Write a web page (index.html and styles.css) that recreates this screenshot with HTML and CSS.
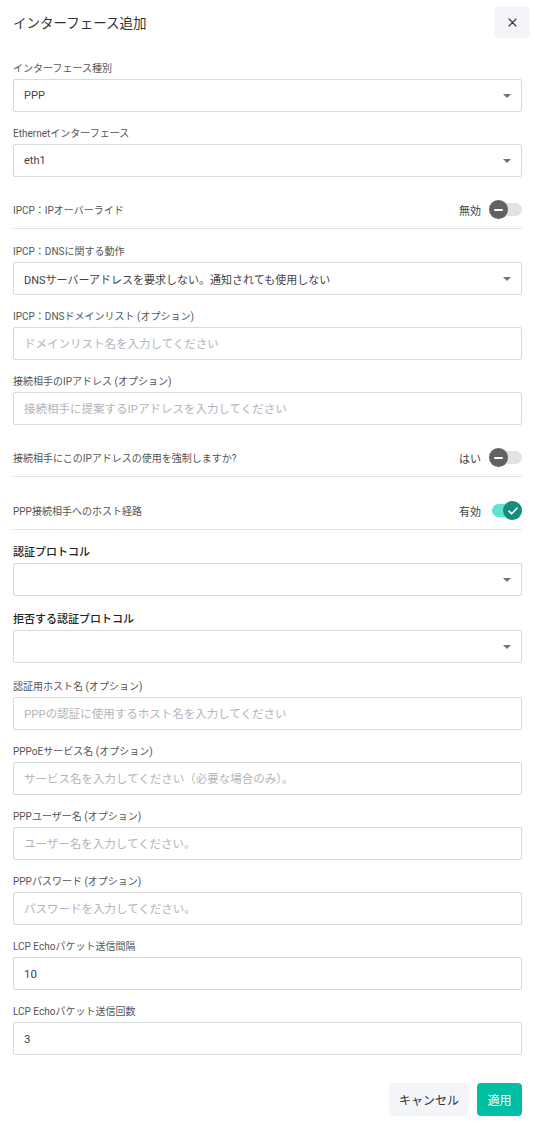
FILE: index.html
```html
<!DOCTYPE html>
<html lang="ja">
<head>
<meta charset="utf-8">
<title>インターフェース追加</title>
<link rel="stylesheet" href="styles.css">
</head>
<body>
<div class="dialog">
  <div class="header">
    <h1 class="title">インターフェース追加</h1>
    <button class="close" type="button" aria-label="閉じる">
      <svg width="9" height="9" viewBox="0 0 9 9"><path d="M1 1L8 8M8 1L1 8" stroke="#333" stroke-width="1.1" fill="none" stroke-linecap="round"/></svg>
    </button>
  </div>

  <div class="field">
    <div class="label">インターフェース種別</div>
    <div class="select"><span>PPP</span><i class="caret"></i></div>
  </div>

  <div class="field">
    <div class="label">Ethernetインターフェース</div>
    <div class="select"><span>eth1</span><i class="caret"></i></div>
  </div>

  <div class="toggle-row">
    <span class="row-text">IPCP：IPオーバーライド</span>
    <div class="toggle-wrap"><span class="state">無効</span><span class="switch off"><span class="knob"><i class="minus"></i></span></span></div>
  </div>

  <div class="field">
    <div class="label">IPCP：DNSに関する動作</div>
    <div class="select"><span>DNSサーバーアドレスを要求しない。通知されても使用しない</span><i class="caret"></i></div>
  </div>

  <div class="field">
    <div class="label">IPCP：DNSドメインリスト (オプション)</div>
    <input class="input" type="text" placeholder="ドメインリスト名を入力してください">
  </div>

  <div class="field">
    <div class="label">接続相手のIPアドレス (オプション)</div>
    <input class="input" type="text" placeholder="接続相手に提案するIPアドレスを入力してください">
  </div>

  <div class="toggle-row">
    <span class="row-text">接続相手にこのIPアドレスの使用を強制しますか?</span>
    <div class="toggle-wrap"><span class="state">はい</span><span class="switch off"><span class="knob"><i class="minus"></i></span></span></div>
  </div>

  <div class="toggle-row">
    <span class="row-text">PPP接続相手へのホスト経路</span>
    <div class="toggle-wrap"><span class="state">有効</span><span class="switch on"><span class="knob"><svg width="10" height="8" viewBox="0 0 10 8"><path d="M1 4.2L3.7 6.8L9 1.2" stroke="#fff" stroke-width="1.6" fill="none" stroke-linecap="round" stroke-linejoin="round"/></svg></span></span></div>
  </div>

  <div class="field section">
    <div class="label heading">認証プロトコル</div>
    <div class="select"><span></span><i class="caret"></i></div>
  </div>

  <div class="field section">
    <div class="label heading">拒否する認証プロトコル</div>
    <div class="select"><span></span><i class="caret"></i></div>
  </div>

  <div class="field">
    <div class="label">認証用ホスト名 (オプション)</div>
    <input class="input" type="text" placeholder="PPPの認証に使用するホスト名を入力してください">
  </div>

  <div class="field">
    <div class="label">PPPoEサービス名 (オプション)</div>
    <input class="input" type="text" placeholder="サービス名を入力してください（必要な場合のみ）。">
  </div>

  <div class="field">
    <div class="label">PPPユーザー名 (オプション)</div>
    <input class="input" type="text" placeholder="ユーザー名を入力してください。">
  </div>

  <div class="field">
    <div class="label">PPPパスワード (オプション)</div>
    <input class="input" type="text" placeholder="パスワードを入力してください。">
  </div>

  <div class="field">
    <div class="label">LCP Echoパケット送信間隔</div>
    <input class="input" type="text" value="10">
  </div>

  <div class="field">
    <div class="label">LCP Echoパケット送信回数</div>
    <input class="input" type="text" value="3">
  </div>

  <div class="footer">
    <button class="btn cancel" type="button">キャンセル</button>
    <button class="btn apply" type="button">適用</button>
  </div>
</div>
</body>
</html>
```

FILE: styles.css
```css
* { box-sizing: border-box; }

body {
  margin: 0;
  background: #fff;
  color: #333;
  font-family: Roboto, "Noto Sans CJK JP", sans-serif;
}

.dialog {
  padding: 6px 13px 0;
}

.header {
  display: flex;
  align-items: center;
  justify-content: space-between;
  margin-right: -8px;
  margin-bottom: 23px;
}

.title {
  margin: 0;
  font-size: 13.5px;
  font-weight: 400;
  color: #333;
}

.close {
  width: 36px;
  height: 32px;
  border: 0;
  border-radius: 4px;
  background: #f4f5f9;
  display: flex;
  align-items: center;
  justify-content: center;
  padding: 0;
}

.field {
  margin-bottom: 14px;
}

.field.section {
  margin-bottom: 16px;
}

.label {
  font-size: 10px;
  line-height: 15px;
  color: #555;
  margin-bottom: 3px;
  white-space: nowrap;
}

.label.heading {
  font-size: 11px;
  font-weight: 500;
  color: #222;
}

.select,
.input {
  display: flex;
  align-items: center;
  width: 100%;
  height: 33px;
  border: 1px solid #d6d9de;
  border-radius: 2px;
  padding: 0 10px;
  font-family: Roboto, "Noto Sans CJK JP", sans-serif;
  font-weight: 400;
  color: #444;
  background: #fff;
}

.select {
  font-size: 11px;
}

.input {
  font-size: 11.5px;
  outline: none;
}

.select span {
  flex: 1;
}

.caret {
  width: 0;
  height: 0;
  border-left: 4px solid transparent;
  border-right: 4px solid transparent;
  border-top: 4px solid #6b7280;
}

.input::placeholder {
  color: #b2b5b9;
}

.toggle-row {
  display: flex;
  align-items: center;
  justify-content: space-between;
  height: 38px;
  padding: 4px 0;
  border-bottom: 1px solid #e2e4e8;
  margin-bottom: 15px;
}

.row-text {
  font-size: 10px;
  color: #555;
}

.toggle-wrap {
  display: flex;
  align-items: center;
}

.state {
  font-size: 11px;
  color: #444;
  margin-right: 8px;
}

.switch {
  position: relative;
  width: 33px;
  height: 19px;
  display: block;
}

.switch::before {
  content: "";
  position: absolute;
  left: 3px;
  right: 0;
  top: 3px;
  height: 13px;
  border-radius: 7px;
  background: #e2e2e2;
}

.switch.on::before {
  background: #5de3cf;
}

.knob {
  position: absolute;
  top: 0;
  left: 0;
  width: 19px;
  height: 19px;
  border-radius: 50%;
  background: #616161;
  display: flex;
  align-items: center;
  justify-content: center;
}

.switch.on .knob {
  left: auto;
  right: 0;
  background: #168c7c;
}

.minus {
  width: 9px;
  height: 2px;
  background: #fff;
  border-radius: 1px;
}

.footer {
  display: flex;
  justify-content: flex-end;
  gap: 8px;
  padding-top: 14px;
}

.btn {
  height: 33px;
  border: 0;
  border-radius: 4px;
  padding: 0 10px;
  font-family: Roboto, "Noto Sans CJK JP", sans-serif;
  font-size: 12px;
}

.btn.cancel {
  width: 80px;
  background: #f4f5f9;
  color: #333;
}

.btn.apply {
  width: 45px;
  background: #00bfa5;
  color: #fff;
}
```
